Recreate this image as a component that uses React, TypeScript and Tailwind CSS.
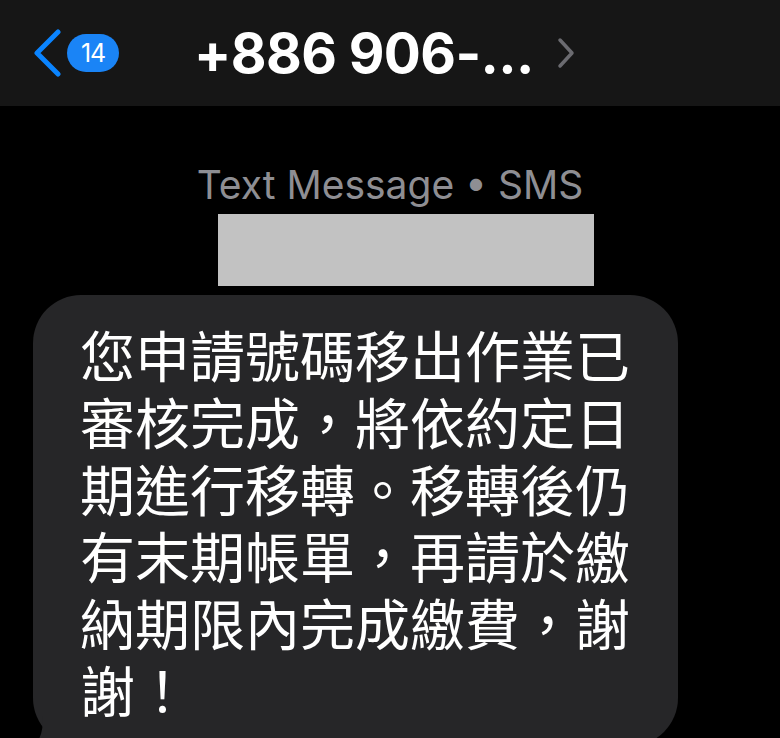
const lines = [
  '您申請號碼移出作業已',
  '審核完成，將依約定日',
  '期進行移轉。移轉後仍',
  '有末期帳單，再請於繳',
  '納期限內完成繳費，謝',
  '謝！',
]

const App: React.FC = () => {
  return (
    <div className="h-[738px] overflow-hidden bg-black font-['Inter','Noto_Sans_CJK_TC',sans-serif]">
      <header className="flex h-[106px] items-center bg-[#161616]">
        <svg width="34" height="48" viewBox="0 0 34 48" className="ml-[30px] shrink-0">
          <path d="M28 3 L7 24 L28 45" fill="none" stroke="#0a84ff" strokeWidth="5" strokeLinecap="round" strokeLinejoin="round" />
        </svg>
        <div className="ml-[3px] flex h-[38px] w-[52px] items-center justify-center rounded-full bg-[#1a84f6] text-[25px] leading-none tracking-tighter text-white">
          14
        </div>
        <h1 className="ml-[75px] text-[55px] leading-none font-bold tracking-[-0.6px] text-white">+886 906-...</h1>
        <svg width="20" height="32" viewBox="0 0 20 32" className="ml-[22px] shrink-0">
          <path d="M4 3 L16 16 L4 29" fill="none" stroke="#6b6b70" strokeWidth="3.5" strokeLinecap="round" strokeLinejoin="round" />
        </svg>
      </header>

      <div className="mt-[56px] text-center text-[39px] leading-[46px] text-[#8e8e93]">Text Message • SMS</div>
      <div className="ml-[218px] mt-[6px] h-[72px] w-[376px] bg-[#c2c2c2]" />

      <div className="relative mt-[9px] ml-[33px] w-[645px]">
        <div className="rounded-[48px] bg-[#262628] px-[47px] pt-[25px] pb-[24px] text-[55px] leading-[67px] text-white font-['Noto_Sans_CJK_TC',sans-serif]">
          {lines.map((l) => (
            <div key={l} className="whitespace-nowrap">
              {l}
            </div>
          ))}
        </div>
        <svg width="30" height="30" viewBox="0 0 30 30" className="absolute bottom-0 -left-[6px]">
          <path d="M6 30 C14 24 16 14 16 0 L30 0 L30 30 Z" fill="#262628" />
        </svg>
      </div>
    </div>
  )
}

export default App
